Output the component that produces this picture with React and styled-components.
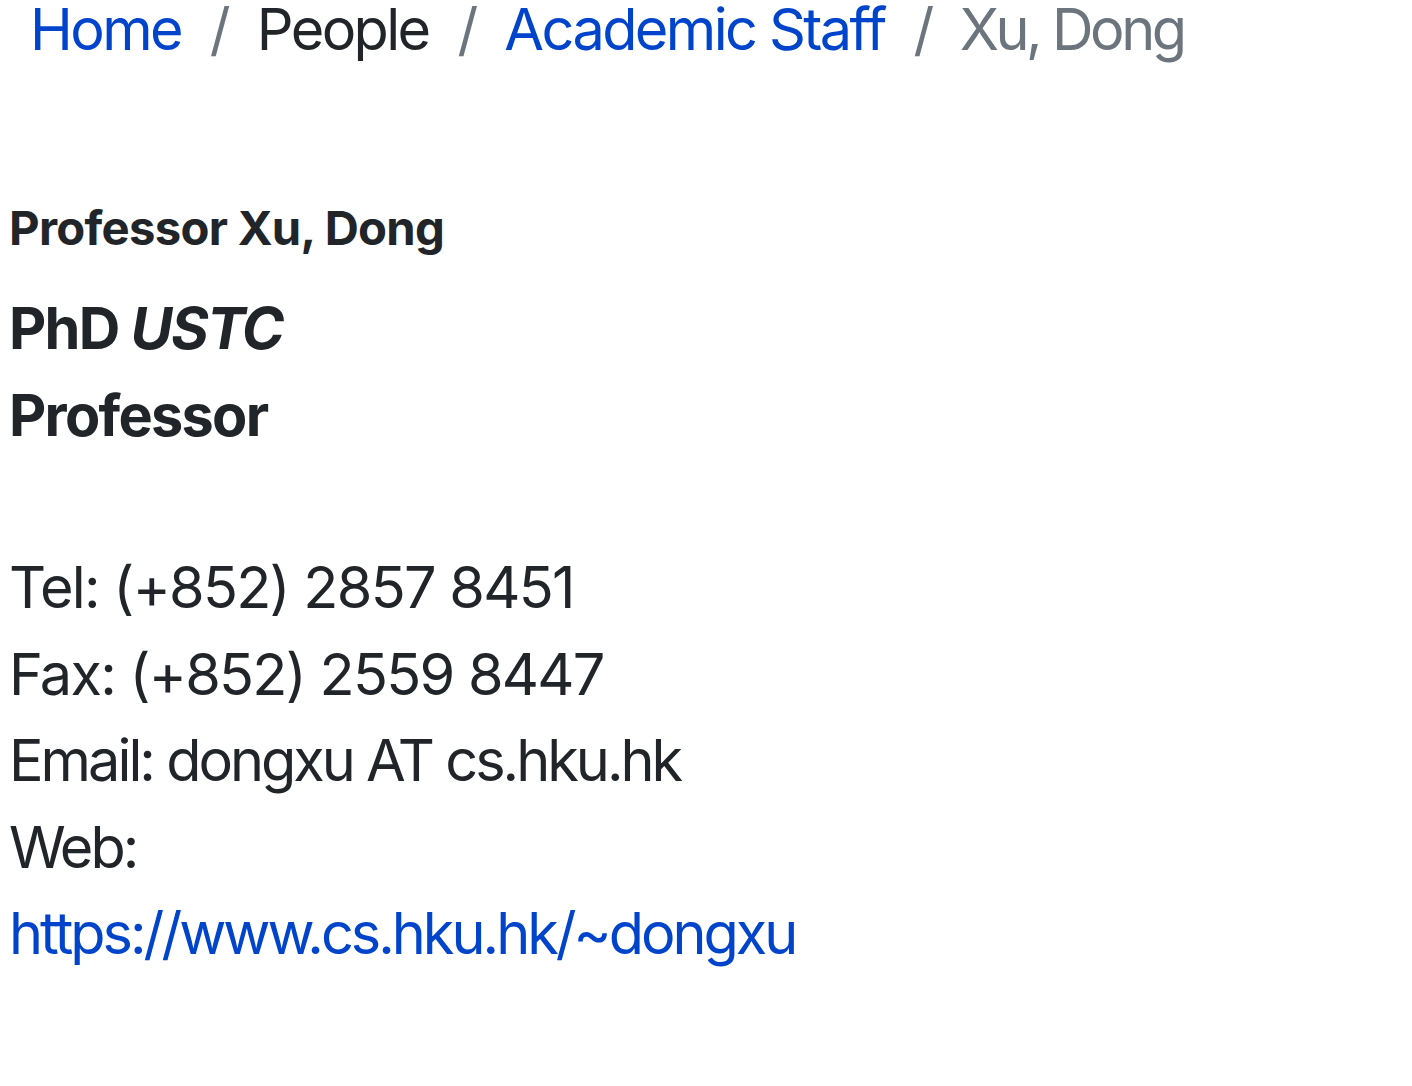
import React from 'react';
import styled, { createGlobalStyle } from 'styled-components';

const GlobalStyle = createGlobalStyle`
  html {
    font-size: 57.6px;
  }
  body {
    margin: 0;
    padding: 0 9px;
    background: #fff;
    color: #212529;
    font-family: Inter, "Noto Sans", sans-serif;
    font-size: 1rem;
    line-height: 1.5;
    letter-spacing: -0.03em;
  }
`;

const crumbs = [
  { label: 'Home', href: '#', link: true },
  { label: 'People' },
  { label: 'Academic Staff', href: '#', link: true },
  { label: 'Xu, Dong', active: true },
];

function App() {
  return (
    <>
      <GlobalStyle />
      <Breadcrumb>
        {crumbs.map((c) => (
          <Crumb key={c.label} $active={c.active}>
            {c.link ? <CrumbLink href={c.href}>{c.label}</CrumbLink> : c.label}
          </Crumb>
        ))}
      </Breadcrumb>
      <Profile>
        <Name>Professor Xu, Dong</Name>
        <Degree>
          PhD <em>USTC</em>
        </Degree>
        <Degree>Professor</Degree>
        <Contact>
          <Line>Tel: (+852) 2857 8451</Line>
          <Line>Fax: (+852) 2559 8447</Line>
          <Line $tight>Email: dongxu AT cs.hku.hk</Line>
          <Line $tight>
            Web:
            <br />
            <WebLink href="#">https://www.cs.hku.hk/~dongxu</WebLink>
          </Line>
        </Contact>
      </Profile>
    </>
  );
}

const Breadcrumb = styled.ol`
  display: flex;
  flex-wrap: wrap;
  list-style: none;
  margin: -14px 0 0;
  padding: 0 0 0 21px;
  letter-spacing: -0.045em;
`;

const Crumb = styled.li`
  color: ${(p) => (p.$active ? '#6c757d' : '#212529')};
  letter-spacing: ${(p) => (p.$active ? '-0.06em' : 'inherit')};

  &:not(:first-child) {
    padding-left: 0.5rem;
  }

  &:not(:first-child)::before {
    content: '/';
    float: left;
    padding-right: 0.5rem;
    color: #6c757d;
  }
`;

const CrumbLink = styled.a`
  color: #0044cc;
  text-decoration: none;
`;

const Profile = styled.div`
  padding-top: 121px;
`;

const Name = styled.h4`
  margin: 0 0 21px;
  font-size: 0.82rem;
  font-weight: 700;
  line-height: 1.5;
  letter-spacing: -0.015em;
`;

const Degree = styled.h3`
  margin: 0;
  font-size: 1rem;
  font-weight: 700;
  line-height: 1.5;
  letter-spacing: -0.03em;
`;

const Contact = styled.div`
  padding-top: 1.5rem;
`;

const Line = styled.p`
  margin: 0;
  letter-spacing: ${(p) => (p.$tight ? '-0.052em' : '-0.03em')};
`;

const WebLink = styled.a`
  color: #0044cc;
  text-decoration: none;
`;

export default App;
